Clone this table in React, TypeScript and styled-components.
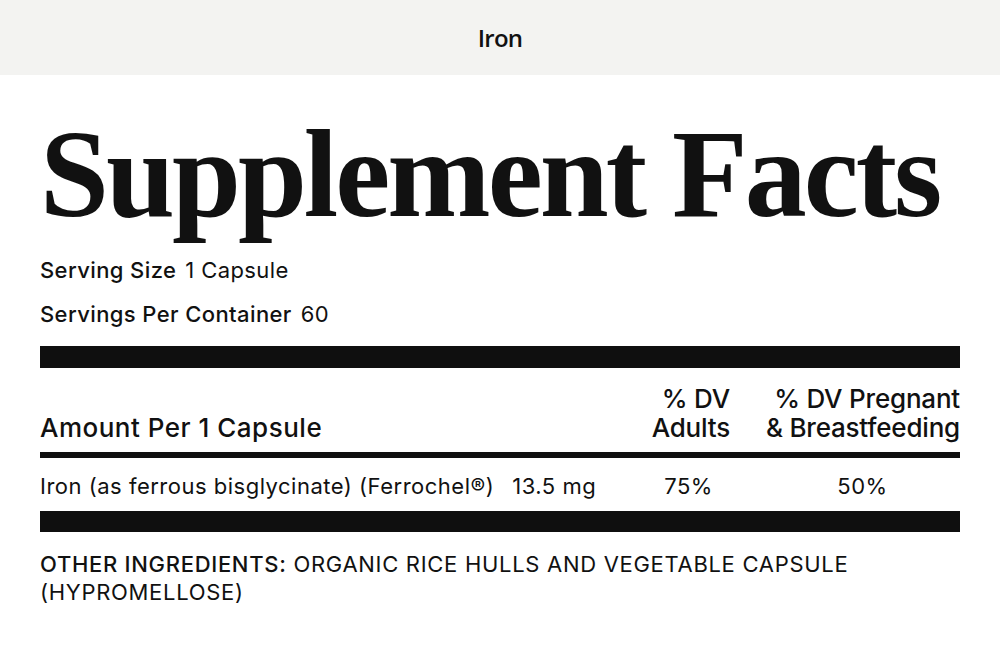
import styled, { createGlobalStyle } from "styled-components";

const GlobalStyle = createGlobalStyle`
	html, body {
		margin: 0;
		padding: 0;
		background: #ffffff;
		color: #111111;
		font-family: Inter, "Liberation Sans", sans-serif;
	}
`;

const TopBar = styled.header`
	display: flex;
	height: 75px;
	align-items: center;
	justify-content: center;
	background-color: #f3f3f1;
	font-family: "Open Sans", "Liberation Sans", sans-serif;
	font-size: 24px;
	font-weight: 600;
	letter-spacing: -0.8px;
	color: #111111;
`;

const Panel = styled.main`
	padding: 0 40px;
`;

const Title = styled.h1`
	margin: 38px 0 0;
	font-family: "Liberation Serif", "DejaVu Serif", serif;
	font-size: 124px;
	font-weight: 700;
	line-height: 124px;
	letter-spacing: -3px;
	white-space: nowrap;
`;

const InfoLine = styled.div`
	display: flex;
	gap: 9px;
	font-size: 22px;
	letter-spacing: 0.4px;
	line-height: 44px;
`;

const Label = styled.span`
	font-weight: 500;
`;

const Rule = styled.div<{ $h: number }>`
	height: ${(p) => p.$h}px;
	background-color: #0f0f0f;
`;

const Grid = styled.div`
	display: grid;
	grid-template-columns: 1fr 83px 195px;
	column-gap: 35px;
`;

const HeadRow = styled(Grid)`
	padding: 16px 0 10px;
	align-items: end;
	font-size: 26px;
	font-weight: 500;
	line-height: 29px;
`;

const HeadCell = styled.div<{ $right?: boolean }>`
	text-align: ${(p) => (p.$right ? "right" : "left")};
	letter-spacing: ${(p) => (p.$right ? "-0.2px" : "0.5px")};
	white-space: nowrap;
	justify-self: ${(p) => (p.$right ? "end" : "start")};
`;

const ValueRow = styled(Grid)`
	align-items: center;
	height: 53px;
	padding-top: 2px;
	box-sizing: border-box;
	font-size: 22px;
	letter-spacing: 0.5px;
`;

const NameCell = styled.div`
	display: flex;
	gap: 18px;
	white-space: nowrap;
`;

const ValueCell = styled.div`
	text-align: center;
`;

const Ingredients = styled.p`
	margin: 18px 0 0;
	font-size: 22px;
	letter-spacing: 0.7px;
	line-height: 28px;
`;

export default function App() {
	return (
		<>
			<GlobalStyle />
			<TopBar>Iron</TopBar>
			<Panel>
				<Title>Supplement Facts</Title>
				<InfoLine style={{ marginTop: 11 }}>
					<Label>Serving Size</Label>
					<span>1 Capsule</span>
				</InfoLine>
				<InfoLine>
					<Label>Servings Per Container</Label>
					<span>60</span>
				</InfoLine>
				<Rule $h={22} style={{ marginTop: 10 }} />
				<HeadRow>
					<HeadCell>Amount Per 1 Capsule</HeadCell>
					<HeadCell $right>
						% DV
						<br />
						Adults
					</HeadCell>
					<HeadCell $right>
						% DV Pregnant
						<br />
						&amp; Breastfeeding
					</HeadCell>
				</HeadRow>
				<Rule $h={6} />
				<ValueRow>
					<NameCell>
						<span>Iron (as ferrous bisglycinate) (Ferrochel®)</span>
						<span>13.5 mg</span>
					</NameCell>
					<ValueCell>75%</ValueCell>
					<ValueCell>50%</ValueCell>
				</ValueRow>
				<Rule $h={21} />
				<Ingredients>
					<Label>OTHER INGREDIENTS:</Label> ORGANIC RICE HULLS AND VEGETABLE CAPSULE (HYPROMELLOSE)
				</Ingredients>
			</Panel>
		</>
	);
}
